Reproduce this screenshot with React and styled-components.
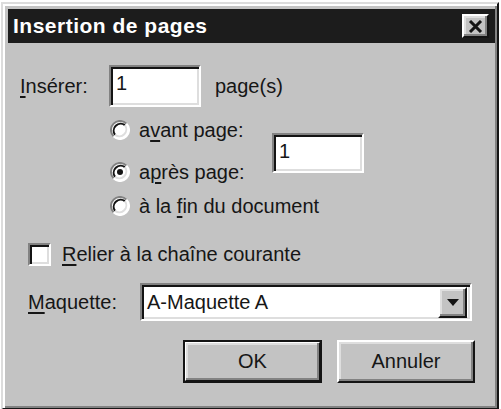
import React from "react";
import styled, { createGlobalStyle } from "styled-components";

const GlobalStyle = createGlobalStyle`
	body {
		margin: 0;
		background: #ffffff;
		font-family: "Liberation Sans", Arial, sans-serif;
	}
`;

const Window = styled.div`
	box-sizing: border-box;
	width: 498px;
	height: 408px;
	margin: 2px 0 0 1px;
	padding: 5px 2px 0 5px;
	background: #c3c3c3;
	border: 2px solid;
	border-color: #dcdcdc #151515 #151515 #dcdcdc;
	box-shadow: inset 2px 2px #ffffff, inset -2px -2px #828282;
	display: flex;
	flex-direction: column;
	color: #161616;
	font-size: 20px;
	line-height: 1.15;
`;

const TitleBar = styled.div`
	height: 34px;
	flex-shrink: 0;
	background: #1c1c1c;
	display: flex;
	align-items: center;
	justify-content: space-between;
	padding: 0 6px 0 5px;
`;

const Title = styled.span`
	color: #ffffff;
	font-weight: bold;
	font-size: 21px;
	letter-spacing: 0.5px;
`;

const Raised = styled.button`
	box-sizing: border-box;
	background: #c3c3c3;
	border: 2px solid;
	border-color: #ffffff #141414 #141414 #ffffff;
	box-shadow: inset -2px -2px #828282, inset 2px 2px #dedede;
	padding: 0;
	display: flex;
	align-items: center;
	justify-content: center;
	font-family: inherit;
	color: #161616;
`;

const CloseButton = styled(Raised)`
	width: 27px;
	height: 24px;
`;

const Body = styled.div`
	display: flex;
	flex-direction: column;
	padding: 0 20px 0 12px;
`;

const Row = styled.div`
	display: flex;
	align-items: center;
	margin-top: ${(p) => p.$top}px;
	margin-left: ${(p) => p.$left || 0}px;
`;

const Label = styled.span`
	width: ${(p) => p.$width}px;
	flex-shrink: 0;
	white-space: nowrap;
`;

const Key = styled.span`
	text-decoration: underline;
	text-underline-offset: 3px;
`;

const Field = styled.div`
	box-sizing: border-box;
	width: ${(p) => p.$width}px;
	height: ${(p) => p.$height}px;
	background: #ffffff;
	border: 2px solid;
	border-color: #828282 #ffffff #ffffff #828282;
	box-shadow: inset 2px 2px #141414, inset -2px -2px #dedede;
	padding: 5px 0 0 5px;
	font-size: 20px;
	display: flex;
	align-items: flex-start;
`;

const Suffix = styled.span`
	margin-left: 14px;
`;

const RadioGrid = styled.div`
	display: grid;
	grid-template-columns: 162px 92px;
	grid-template-rows: 42px 34px 24px;
	margin-left: 90px;
	margin-top: 11px;
`;

const RadioRow = styled.label`
	display: flex;
	align-items: center;
	gap: 9px;
	height: 24px;
	align-self: start;
	grid-row: ${(p) => p.$row};
	grid-column: 1 / ${(p) => (p.$wide ? 3 : 2)};
	white-space: nowrap;
`;

const PageField = styled(Field)`
	grid-column: 2;
	grid-row: 1 / 3;
	margin-top: 15px;
	align-self: start;
`;

const CheckBox = styled.span`
	box-sizing: border-box;
	flex-shrink: 0;
	width: 23px;
	height: 23px;
	background: #ffffff;
	border: 2px solid;
	border-color: #828282 #ffffff #ffffff #828282;
	box-shadow: inset 2px 2px #141414, inset -2px -2px #dedede;
	margin-right: 11px;
`;

const Combo = styled(Field)`
	padding: 0 3px 0 5px;
	align-items: center;
	justify-content: space-between;
`;

const DropButton = styled(Raised)`
	width: 29px;
	height: 31px;
`;

const Buttons = styled.div`
	display: flex;
	justify-content: flex-end;
	gap: 15px;
	margin-top: 19px;
`;

const PushButton = styled(Raised)`
	width: ${(p) => p.$width}px;
	height: 43px;
	font-size: 20px;
	${(p) =>
		p.$default &&
		`
		outline: 2px solid #141414;
		outline-offset: -2px;
		border-width: 3px;
	`}
`;

const Radio = ({ checked }) => (
	<svg width="20" height="20" viewBox="0 0 20 20">
		<circle cx="10" cy="10" r="9" fill="#ffffff" />
		<path d="M16.4 3.6 A9 9 0 0 0 3.6 16.4" stroke="#828282" strokeWidth="2" fill="none" />
		<path d="M14.9 5.1 A7 7 0 0 0 5.1 14.9" stroke="#141414" strokeWidth="2" fill="none" />
		<path d="M3.6 16.4 A9 9 0 0 0 16.4 3.6" stroke="#ffffff" strokeWidth="2" fill="none" />
		<path d="M5.1 14.9 A7 7 0 0 0 14.9 5.1" stroke="#dedede" strokeWidth="2" fill="none" />
		{checked && <circle cx="10" cy="10" r="3" fill="#141414" />}
	</svg>
);

const App = () => {
	return (
		<>
			<GlobalStyle />
			<Window>
				<TitleBar>
					<Title>Insertion de pages</Title>
					<CloseButton>
						<svg width="15" height="13" viewBox="0 0 15 13">
							<path d="M2 1 L13 12 M13 1 L2 12" stroke="#141414" strokeWidth="3" />
						</svg>
					</CloseButton>
				</TitleBar>
				<Body>
					<Row $top={22}>
						<Label $width={89}>
							<Key>I</Key>nsérer:
						</Label>
						<Field $width={92} $height={42}>1</Field>
						<Suffix>page(s)</Suffix>
					</Row>

					<RadioGrid>
						<RadioRow $row={1}>
							<Radio />
							<span>
								a<Key>v</Key>ant page:
							</span>
						</RadioRow>
						<RadioRow $row={2}>
							<Radio checked />
							<span>
								a<Key>p</Key>rès page:
							</span>
						</RadioRow>
						<RadioRow $row={3} $wide>
							<Radio />
							<span>
								à la <Key>f</Key>in du document
							</span>
						</RadioRow>
						<PageField $width={92} $height={40}>1</PageField>
					</RadioGrid>

					<Row $top={25} $left={8}>
						<CheckBox />
						<span>
							<Key>R</Key>elier à la chaîne courante
						</span>
					</Row>

					<Row $top={17} $left={8}>
						<Label $width={112}>
							<Key>M</Key>aquette:
						</Label>
						<Combo $width={332} $height={38}>
							<span>A-Maquette A</span>
							<DropButton>
								<svg width="12" height="7" viewBox="0 0 12 7">
									<path d="M0 0 H12 L6 7 Z" fill="#141414" />
								</svg>
							</DropButton>
						</Combo>
					</Row>

					<Buttons>
						<PushButton $width={139} $default>
							OK
						</PushButton>
						<PushButton $width={138}>Annuler</PushButton>
					</Buttons>
				</Body>
			</Window>
		</>
	);
};

export default App;
